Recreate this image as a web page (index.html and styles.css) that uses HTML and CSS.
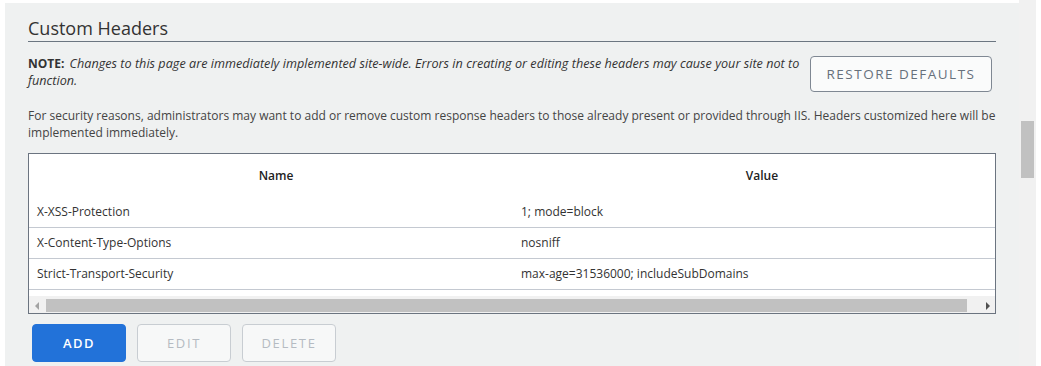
FILE: index.html
```html
<!DOCTYPE html>
<html lang="en">
<head>
    <meta charset="UTF-8">
    <meta name="viewport" content="width=device-width, initial-scale=1.0">
    <title>Custom Headers</title>
    <link rel="stylesheet" href="styles.css">
</head>
<body>
    <!-- settings panel -->
    <div class="panel">
        <h2 class="title">Custom Headers</h2>
        <div class="note_row">
            <p class="note"><b>NOTE:</b> <i>Changes to this page are immediately implemented site-wide. Errors in creating or editing these headers may cause your site not to function.</i></p>
            <a href="#" class="btn_restore">RESTORE DEFAULTS</a>
        </div>
        <p class="intro">For security reasons, administrators may want to add or remove custom response headers to those already present or provided through IIS. Headers customized here will be implemented immediately.</p>

        <!-- headers grid -->
        <div class="grid_box">
            <div class="grid_scroll">
                <table class="grid">
                    <colgroup>
                        <col class="c_name">
                        <col class="c_value">
                    </colgroup>
                    <thead>
                        <tr>
                            <th class="th_name">Name</th>
                            <th>Value</th>
                        </tr>
                    </thead>
                    <tbody>
                        <tr>
                            <td>X-XSS-Protection</td>
                            <td>1; mode=block</td>
                        </tr>
                        <tr>
                            <td>X-Content-Type-Options</td>
                            <td>nosniff</td>
                        </tr>
                        <tr>
                            <td>Strict-Transport-Security</td>
                            <td>max-age=31536000; includeSubDomains</td>
                        </tr>
                    </tbody>
                </table>
            </div>
            <div class="hbar">
                <span class="arr arr_l"></span>
                <span class="hthumb"></span>
                <span class="arr arr_r"></span>
            </div>
        </div>

        <div class="actions">
            <a href="#" class="btn btn_add">ADD</a>
            <a href="#" class="btn btn_off">EDIT</a>
            <a href="#" class="btn btn_off">DELETE</a>
        </div>
    </div>
    <!-- page scrollbar -->
    <div class="vbar"><span class="vthumb"></span></div>
</body>
</html>
```

FILE: styles.css
```css
*{
    margin: 0;
    padding: 0;
    box-sizing: border-box;
}
body{
    display: flex;
    align-items: stretch;
    height: 366px;
    overflow: hidden;
    background: #fff;
    font-family: "Open Sans", "Liberation Sans", sans-serif;
    font-size: 12px;
    color: #333;
}
.panel{
    width: 1014px;
    margin: 3px 0 0 5px;
    padding: 13px 23px 0 23px;
    background: #eff1f1;
}
.title{
    font-size: 18px;
    font-weight: 400;
    line-height: 24px;
    color: #333;
    border-bottom: 1px solid #6b7681;
    padding-bottom: 1px;
}
.note_row{
    display: flex;
    align-items: flex-start;
    margin-top: 13px;
}
.note{
    flex: 1;
    line-height: 17px;
    color: #333;
}
.note b{
    font-weight: 700;
    margin-right: 2px;
}
.note i{
    font-size: 12.6px;
    letter-spacing: 0.03px;
}
.btn_restore{
    display: block;
    width: 182px;
    height: 36px;
    line-height: 34px;
    margin: 1px 4px 0 7px;
    text-align: center;
    text-decoration: none;
    font-size: 13.5px;
    letter-spacing: 1.5px;
    color: #66707b;
    background: #fafbfb;
    border: 1px solid #7f8893;
    border-radius: 4px;
}
.intro{
    margin-top: 15px;
    line-height: 17px;
    color: #444;
}
.grid_box{
    margin-top: 12px;
    border: 1px solid #6b7480;
    background: #fff;
}
.grid_scroll{
    overflow: hidden;
    padding-bottom: 6px;
}
.grid{
    width: 982px;
    table-layout: fixed;
    border-collapse: collapse;
}
.c_name{width: 484px;}
.c_value{width: 498px;}
.grid th{
    height: 42px;
    font-weight: 600;
    color: #222;
    text-align: center;
    vertical-align: middle;
}
.grid th.th_name{padding-left: 10px;}
.grid td{
    height: 31px;
    padding: 0 8px;
    border-bottom: 1px solid #c4c9d1;
    vertical-align: middle;
    white-space: nowrap;
}
.hbar{
    display: flex;
    align-items: center;
    height: 17px;
    background: #f1f1f1;
}
.arr{
    width: 16px;
    height: 17px;
    position: relative;
}
.arr::after{
    content: "";
    position: absolute;
    top: 6px;
    border-top: 4px solid transparent;
    border-bottom: 4px solid transparent;
}
.arr_l::after{
    left: 6px;
    border-right: 4px solid #a3a3a3;
}
.arr_r{margin-left: auto;}
.arr_r::after{
    left: 7px;
    border-left: 4px solid #505050;
}
.hthumb{
    width: 921px;
    height: 13px;
    margin: 2px 0 0 1px;
    background: #c1c1c1;
}
.actions{
    display: flex;
    gap: 11px;
    margin: 10px 0 0 4px;
}
.btn{
    display: block;
    width: 94px;
    height: 38px;
    line-height: 36px;
    text-align: center;
    text-decoration: none;
    font-size: 13px;
    font-weight: 600;
    letter-spacing: 1.5px;
    border-radius: 4px;
    border: 1px solid transparent;
}
.btn_add{
    background: #2272d9;
    border-color: #2272d9;
    color: #fff;
}
.btn_off{
    background: #f7f8f8;
    border-color: #c8cdd2;
    color: #b5bbc2;
    font-weight: 400;
    letter-spacing: 1.7px;
}
.vbar{
    width: 17px;
    background: #f1f1f1;
}
.vthumb{
    display: block;
    width: 13px;
    height: 57px;
    margin: 121px 0 0 2px;
    background: #c1c1c1;
}
```
